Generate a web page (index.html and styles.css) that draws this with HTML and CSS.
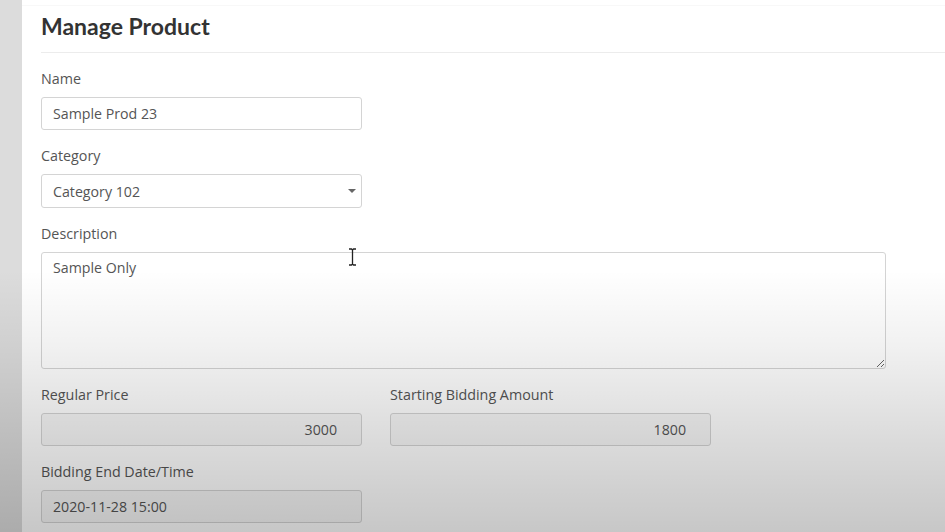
FILE: index.html
```html
<!DOCTYPE html>
<html>
<head>
<meta charset="utf-8">
<link rel="stylesheet" href="styles.css">
</head>
<body>
<div class="page">
  <aside class="strip"></aside>
  <main class="panel">
    <h1 class="title">Manage Product</h1>
    <form class="form">
      <div class="group w-sm">
        <label class="label">Name</label>
        <input class="control" type="text" value="Sample Prod 23">
      </div>
      <div class="group w-sm">
        <label class="label">Category</label>
        <div class="select-wrap">
          <select class="control select">
            <option>Category 102</option>
          </select>
        </div>
      </div>
      <div class="group w-lg">
        <label class="label">Description</label>
        <textarea class="control area">Sample Only</textarea>
      </div>
      <div class="row">
        <div class="group w-sm">
          <label class="label">Regular Price</label>
          <input class="control readonly num" type="text" value="3000" readonly>
        </div>
        <div class="group w-sm">
          <label class="label">Starting Bidding Amount</label>
          <input class="control readonly num" type="text" value="1800" readonly>
        </div>
      </div>
      <div class="group w-sm">
        <label class="label">Bidding End Date/Time</label>
        <input class="control readonly" type="text" value="2020-11-28 15:00" readonly>
      </div>
    </form>
  </main>
  <svg class="cursor" width="9" height="18" viewBox="0 0 9 18"><path d="M1 1h2.5l1 1 1-1H8M4.5 2v14M1 17h2.5l1-1 1 1H8" fill="none" stroke="#222" stroke-width="1.3"/></svg>
</div>
</body>
</html>
```
FILE: styles.css
```css
html, body {
  margin: 0;
  padding: 0;
  height: 100%;
  overflow: hidden;
}
body {
  font-family: "Open Sans", "Liberation Sans", sans-serif;
  background: #fff;
  color: #555;
}
.page {
  display: flex;
  height: 532px;
  position: relative;
}
.page::after {
  content: "";
  position: absolute;
  inset: 0;
  pointer-events: none;
  background: linear-gradient(to bottom, rgba(0,0,0,0) 0px, rgba(0,0,0,0) 270px, rgba(0,0,0,0.06) 350px, rgba(0,0,0,0.14) 440px, rgba(0,0,0,0.22) 532px);
}
.strip {
  width: 22px;
  flex: none;
  background: #dcdcdc;
}
.panel {
  flex: 1;
  padding: 0 0 0 19px;
  border-top: 1px solid #f8f8f8;
  margin-top: 5px;
}
.title {
  margin: 0;
  padding: 5px 0 11px;
  font-family: "Lato", "Liberation Sans", sans-serif;
  font-weight: 700;
  font-size: 23px;
  line-height: 30px;
  color: #333;
  border-bottom: 1px solid #ececec;
}
.form {
  padding-top: 15px;
}
.group {
  display: flex;
  flex-direction: column;
  margin-bottom: 15px;
}
.w-sm { width: 321px; }
.w-lg { width: 845px; }
.row {
  display: flex;
  gap: 28px;
}
.label {
  font-size: 14.3px;
  line-height: 21px;
  margin-bottom: 8px;
  color: #555;
}
.control {
  box-sizing: border-box;
  height: 33px;
  width: 100%;
  border: 1px solid #d4d4d4;
  border-radius: 3px;
  padding: 0 11px;
  font-family: "Open Sans", "Liberation Sans", sans-serif;
  font-size: 14.2px;
  color: #555;
  background: #fff;
  outline: none;
}
.select-wrap {
  position: relative;
}
.select-wrap::after {
  content: "";
  position: absolute;
  right: 6px;
  top: 15px;
  border-left: 4px solid transparent;
  border-right: 4px solid transparent;
  border-top: 4px solid #666;
}
.select {
  appearance: none;
  -webkit-appearance: none;
  height: 34px;
}
.area {
  height: 117px;
  padding: 5px 11px;
  resize: vertical;
  line-height: 20px;
}
.readonly {
  background: #f7f7f7;
  height: 33px;
}
.num {
  text-align: right;
  padding-right: 24px;
}
.cursor {
  position: absolute;
  left: 348px;
  top: 248px;
}
```
